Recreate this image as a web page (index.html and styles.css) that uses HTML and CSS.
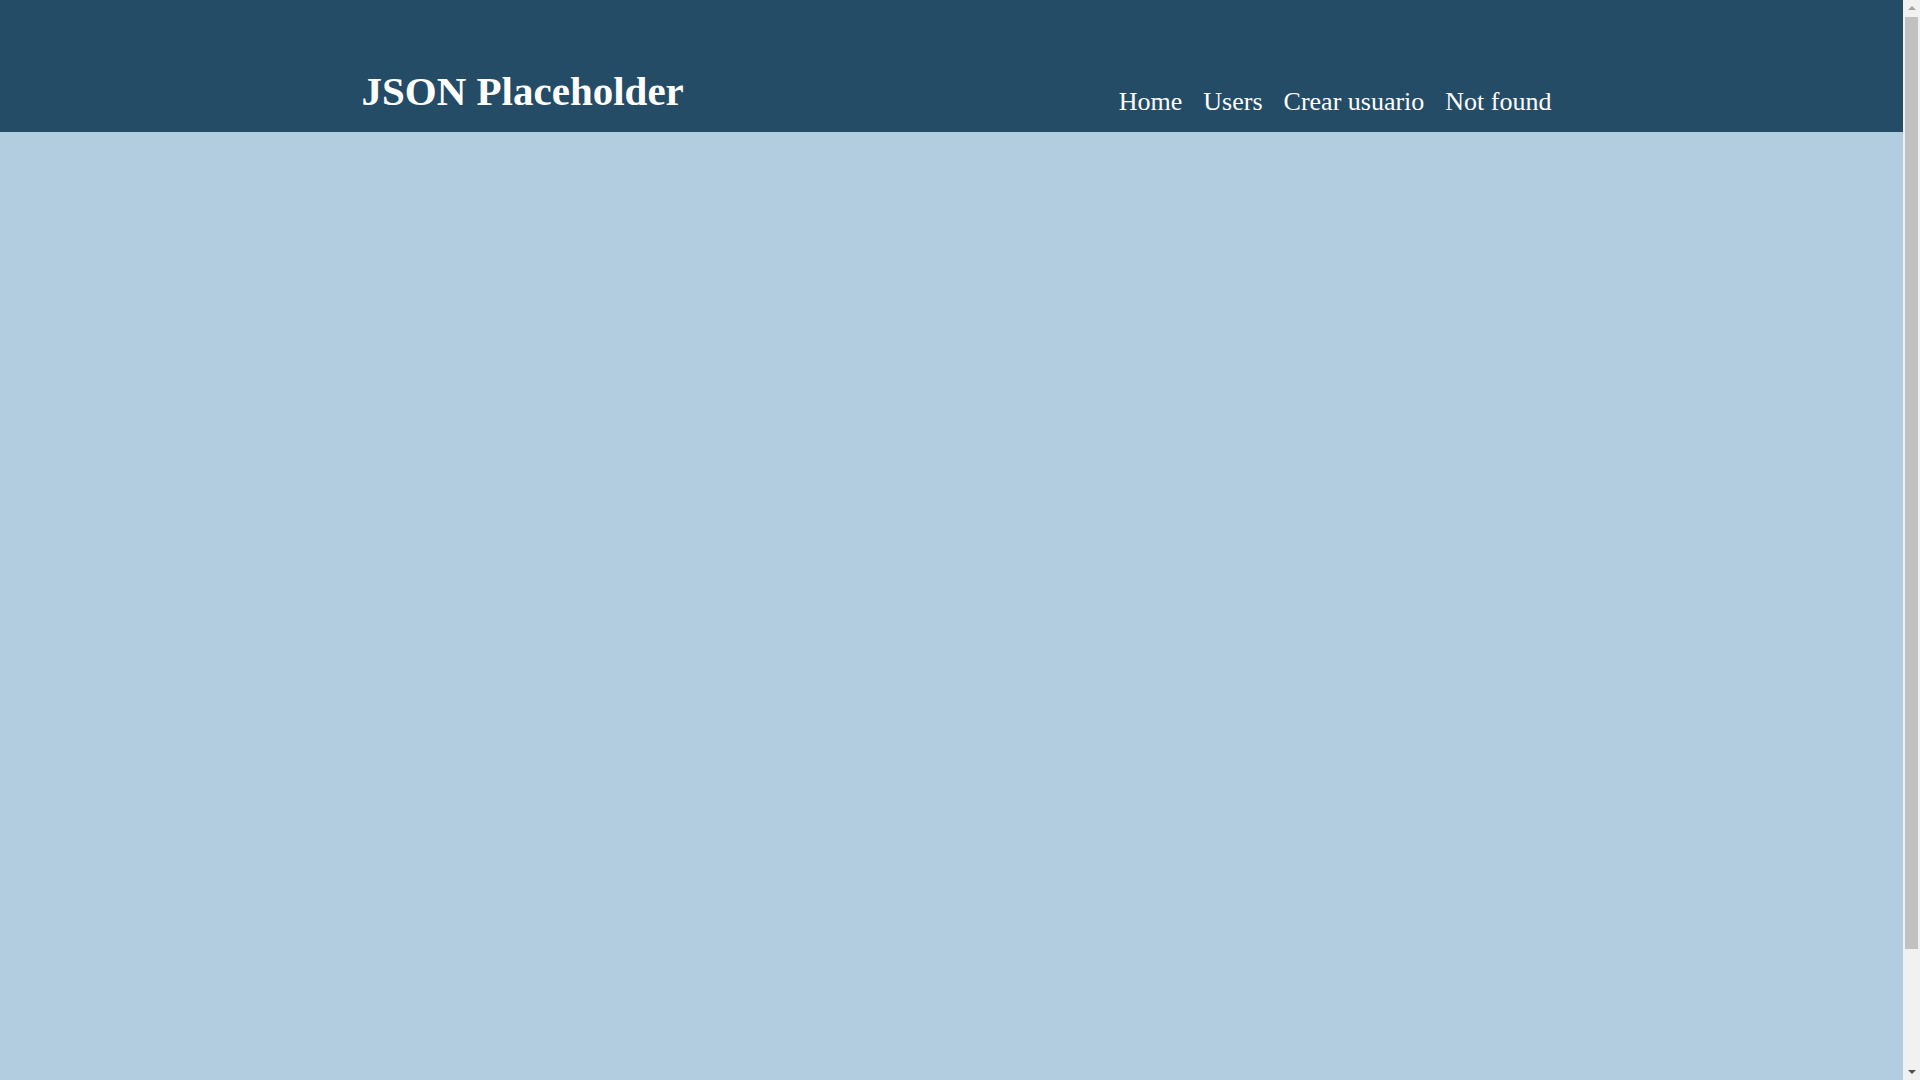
FILE: index.html
```html
<!DOCTYPE html>
<html lang="es">
<head>
<meta charset="utf-8">
<title>JSON Placeholder</title>
<link rel="stylesheet" href="styles.css">
</head>
<body>
<header class="header">
  <div class="container">
    <h1 class="brand">JSON Placeholder</h1>
    <nav class="nav">
      <a class="nav-link" href="#">Home</a>
      <a class="nav-link" href="#">Users</a>
      <a class="nav-link" href="#">Crear usuario</a>
      <a class="nav-link" href="#">Not found</a>
    </nav>
  </div>
</header>
<main class="main"></main>
<div class="fake-scrollbar" aria-hidden="true">
  <span class="sb-arrow sb-up"></span>
  <span class="sb-thumb"></span>
  <span class="sb-arrow sb-down"></span>
</div>
</body>
</html>
```
FILE: styles.css
```css
html, body {
  margin: 0;
  padding: 0;
}
body {
  background: #b3cde0;
  font-family: "Liberation Serif", "DejaVu Serif", serif;
  padding-right: 17px;
}
.header {
  background: #244c66;
  height: 132px;
}
.container {
  width: 1200px;
  margin: 0 auto;
  height: 100%;
  display: flex;
  justify-content: space-between;
  align-items: flex-end;
  box-sizing: border-box;
  padding: 0 0 12px 10px;
}
.brand {
  margin: 0 0 8px 0;
  color: #fff;
  font-size: 41px;
  font-weight: bold;
  line-height: 1;
}
.nav {
  display: flex;
  gap: 21px;
  padding-bottom: 5px;
}
.nav-link {
  color: #fff;
  text-decoration: none;
  font-size: 26px;
  line-height: 1;
}
.main {
  min-height: 100vh;
}
.fake-scrollbar {
  position: fixed;
  top: 0;
  right: 0;
  width: 17px;
  height: 100vh;
  background: #f1f1f1;
  display: flex;
  flex-direction: column;
  align-items: center;
}
.sb-arrow {
  width: 0;
  height: 0;
  border-left: 4px solid transparent;
  border-right: 4px solid transparent;
  margin: 6px 0;
}
.sb-up {
  border-bottom: 4px solid #a3a3a3;
}
.sb-down {
  border-top: 4px solid #505050;
  margin-top: auto;
}
.sb-thumb {
  width: 13px;
  height: 932px;
  background: #c1c1c1;
  margin-top: 1px;
}
```
